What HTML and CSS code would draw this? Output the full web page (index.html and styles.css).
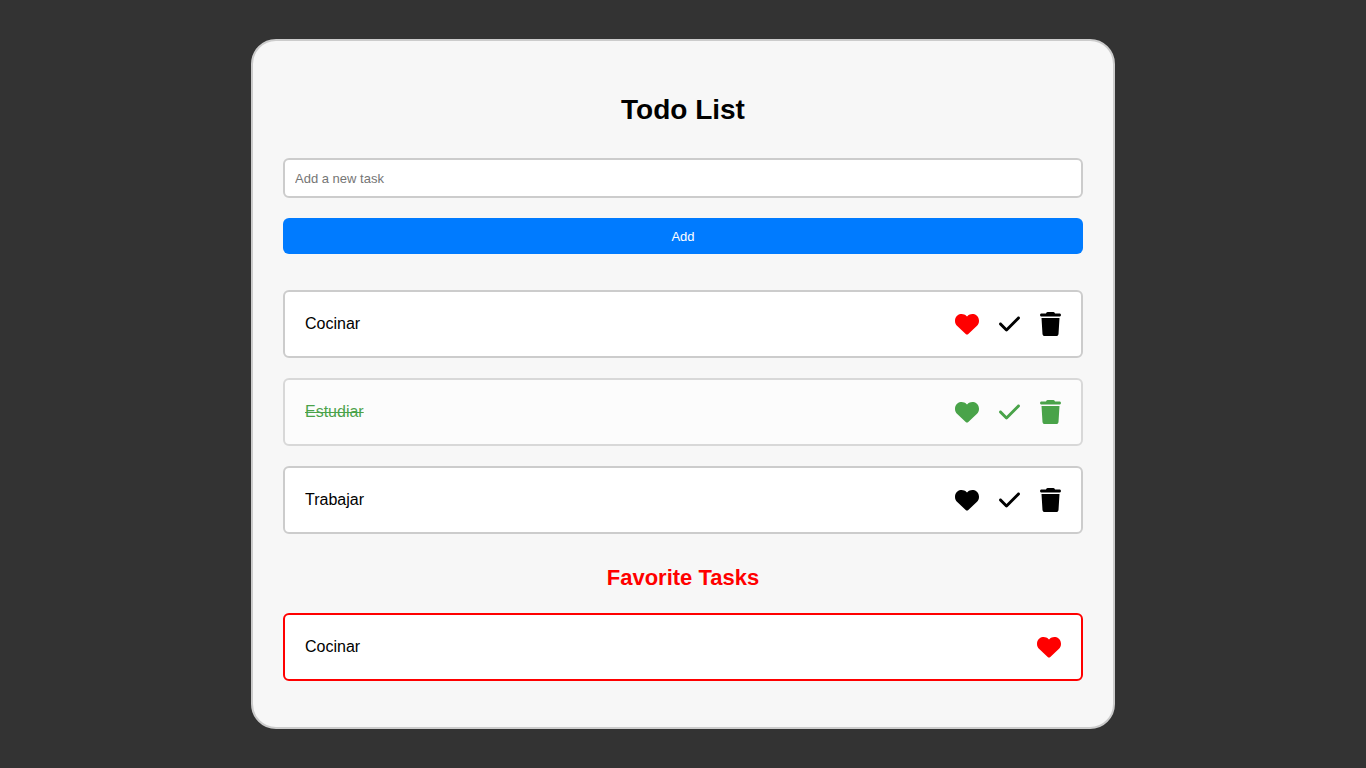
FILE: index.html
```html
<!DOCTYPE html>
<html lang="en">
<head>
<meta charset="utf-8">
<meta name="viewport" content="width=device-width, initial-scale=1">
<title>Todo List</title>
<link rel="stylesheet" href="styles.css">
</head>
<body>
<svg class="sprite" aria-hidden="true">
  <symbol id="heart" viewBox="0 0 512 512"><path d="M47.6 300.4L228.3 469.1c7.5 7 17.4 10.9 27.7 10.9s20.2-3.9 27.7-10.9L464.4 300.4c30.4-28.3 47.6-68 47.6-109.5v-5.8c0-69.9-50.5-129.5-119.4-141C347 36.5 300.6 51.4 268 84L256 96 244 84c-32.6-32.6-79-47.5-124.6-39.9C50.5 55.6 0 115.2 0 185.1v5.8c0 41.5 17.2 81.2 47.6 109.5z"/></symbol>
  <symbol id="check" viewBox="0 0 448 512"><path d="M438.6 105.4c12.5 12.5 12.5 32.8 0 45.3l-256 256c-12.5 12.5-32.8 12.5-45.3 0l-128-128c-12.5-12.5-12.5-32.8 0-45.3s32.8-12.5 45.3 0L160 338.7 393.4 105.4c12.5-12.5 32.8-12.5 45.3 0z"/></symbol>
  <symbol id="trash" viewBox="0 0 448 512"><path d="M135.2 17.7L128 32H32C14.3 32 0 46.3 0 64S14.3 96 32 96H416c17.7 0 32-14.3 32-32s-14.3-32-32-32H320l-7.2-14.3C307.4 6.8 296.3 0 284.2 0H163.8c-12.1 0-23.2 6.8-28.6 17.7zM416 128H32L53.2 467c1.6 25.3 22.6 45 47.9 45H346.9c25.3 0 46.3-19.7 47.9-45L416 128z"/></symbol>
</svg>
<main class="card">
  <h1 class="title">Todo List</h1>
  <form class="task-form">
    <input class="task-input" type="text" placeholder="Add a new task" aria-label="Add a new task">
    <button class="add-button" type="button">Add</button>
  </form>
  <ul class="task-list">
    <li class="task">
      <span class="task-name">Cocinar</span>
      <div class="actions">
        <button class="icon-button favorite" type="button" aria-label="Favorite"><svg class="icon"><use href="#heart"/></svg></button>
        <button class="icon-button" type="button" aria-label="Complete"><svg class="icon icon-narrow"><use href="#check"/></svg></button>
        <button class="icon-button" type="button" aria-label="Delete"><svg class="icon icon-narrow"><use href="#trash"/></svg></button>
      </div>
    </li>
    <li class="task completed">
      <span class="task-name">Estudiar</span>
      <div class="actions">
        <button class="icon-button" type="button" aria-label="Favorite"><svg class="icon"><use href="#heart"/></svg></button>
        <button class="icon-button" type="button" aria-label="Complete"><svg class="icon icon-narrow"><use href="#check"/></svg></button>
        <button class="icon-button" type="button" aria-label="Delete"><svg class="icon icon-narrow"><use href="#trash"/></svg></button>
      </div>
    </li>
    <li class="task">
      <span class="task-name">Trabajar</span>
      <div class="actions">
        <button class="icon-button" type="button" aria-label="Favorite"><svg class="icon"><use href="#heart"/></svg></button>
        <button class="icon-button" type="button" aria-label="Complete"><svg class="icon icon-narrow"><use href="#check"/></svg></button>
        <button class="icon-button" type="button" aria-label="Delete"><svg class="icon icon-narrow"><use href="#trash"/></svg></button>
      </div>
    </li>
  </ul>
  <h2 class="subtitle">Favorite Tasks</h2>
  <ul class="task-list">
    <li class="task favorite-task">
      <span class="task-name">Cocinar</span>
      <div class="actions">
        <button class="icon-button favorite" type="button" aria-label="Remove favorite"><svg class="icon"><use href="#heart"/></svg></button>
      </div>
    </li>
  </ul>
</main>
</body>
</html>
```
FILE: styles.css
```css
* {
  box-sizing: border-box;
}

body {
  display: flex;
  align-items: center;
  justify-content: center;
  min-height: 100vh;
  margin: 0;
  background: #333;
  color: #000;
  font-family: Arial, "Liberation Sans", sans-serif;
  font-size: 16px;
}

.sprite {
  position: absolute;
  width: 0;
  height: 0;
}

.card {
  width: 100%;
  max-width: 864px;
  padding: 52px 30px 46px;
  border: 2px solid #ccc;
  border-radius: 25px;
  background: #f7f7f7;
}

.title {
  margin: 0 0 32px;
  font-size: 28px;
  line-height: 33px;
  text-align: center;
}

.task-form {
  display: flex;
  flex-direction: column;
  gap: 20px;
  margin-bottom: 36px;
}

.task-input,
.add-button {
  width: 100%;
  border-radius: 6px;
  font-family: inherit;
  font-size: 13px;
}

.task-input {
  height: 40px;
  padding: 10px;
  border: 2px solid #ccc;
  background: #fff;
}

.task-input::placeholder {
  color: #757575;
}

.add-button {
  height: 36px;
  padding: 0 10px;
  border: 0;
  background: #007bff;
  color: #fff;
  cursor: pointer;
}

.task-list {
  display: flex;
  flex-direction: column;
  gap: 20px;
  margin: 0;
  padding: 0;
  list-style: none;
}

.task {
  display: flex;
  align-items: center;
  justify-content: space-between;
  padding: 20px;
  border: 2px solid #ccc;
  border-radius: 6px;
  background: #fff;
}

.completed {
  color: green;
  opacity: 0.7;
}

.completed .task-name {
  text-decoration: line-through;
}

.favorite-task {
  border-color: red;
}

.actions {
  display: flex;
  gap: 20px;
}

.icon-button {
  display: flex;
  padding: 0;
  border: 0;
  background: none;
  color: inherit;
  cursor: pointer;
}

.favorite {
  color: red;
}

.icon {
  width: 24px;
  height: 24px;
  fill: currentColor;
}

.icon-narrow {
  width: 21px;
}

.subtitle {
  margin: 31px 0 23px;
  color: red;
  font-size: 22px;
  line-height: 25px;
  text-align: center;
}
```
